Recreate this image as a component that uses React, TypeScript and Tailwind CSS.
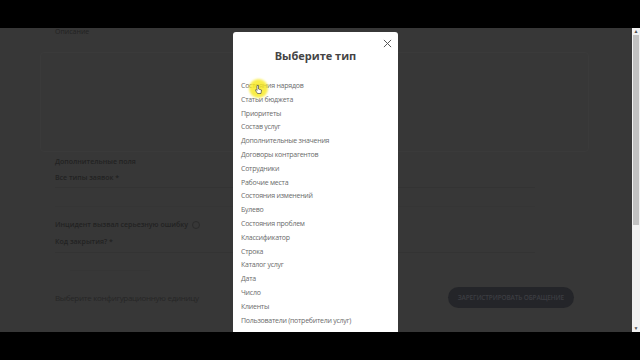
import React from 'react';

const types = [
  'Состояния нарядов',
  'Статьи бюджета',
  'Приоритеты',
  'Состав услуг',
  'Дополнительные значения',
  'Договоры контрагентов',
  'Сотрудники',
  'Рабочие места',
  'Состояния изменений',
  'Булево',
  'Состояния проблем',
  'Классификатор',
  'Строка',
  'Каталог услуг',
  'Дата',
  'Число',
  'Клиенты',
  'Пользователи (потребители услуг)',
];

const font = { fontFamily: '"Open Sans", "Noto Sans", sans-serif' };

export default function App() {
  return (
    <div className="w-[640px] h-[360px] bg-black flex flex-col overflow-hidden" style={font}>
      <div className="h-[28px] shrink-0" />
      <div className="h-[304px] flex relative">
        {/* dimmed page */}
        <div className="flex-1 bg-[#373737] relative overflow-hidden">
          <div className="pl-[55px] pr-[58px] text-[#222]">
            <div className="text-[7px] leading-[8px]">Описание</div>
            <div className="mt-[16px] h-[100px] mx-[-15px] border border-[#3a3a3a] rounded" />
            <div className="mt-[5px] text-[7px] font-semibold leading-[10px]">Дополнительные поля</div>
            <div className="mt-[6px] text-[7px] font-semibold leading-[10px]">Все типы заявок *</div>
            <div className="mt-[4px] h-px bg-[#333] w-[480px]" />
            <div className="mt-[18px] h-px bg-[#353535] w-[480px]" />
            <div className="mt-[13px] flex items-center gap-[4px]">
              <span className="text-[7px] font-semibold leading-[10px]">Инцидент вызвал серьезную ошибку</span>
              <span className="w-[8px] h-[8px] rounded-full border border-[#2a2a2a]" />
            </div>
            <div className="mt-[7px] text-[7px] font-semibold leading-[10px]">Код закрытия? *</div>
            <div className="mt-[5px] h-px bg-[#333] w-[480px]" />
            <div className="mt-[17px] ml-[15px] h-px bg-[#353535] w-[80px]" />
            <div className="mt-[16px] flex items-center justify-between">
              <span className="text-[8px] tracking-[-0.3px] text-[#262626]">Выберите конфигурационную единицу</span>
              <span className="h-[21px] px-[10px] rounded-full bg-[#242529] text-[6.5px] font-semibold text-[#3c3d42] flex items-center tracking-tight">
                ЗАРЕГИСТРИРОВАТЬ ОБРАЩЕНИЕ
              </span>
            </div>
          </div>

          {/* modal */}
          <div className="absolute left-[233px] top-[4px] w-[165px] h-[320px] bg-white rounded-t-[3px]">
            <button className="absolute right-[6px] top-[7px] text-[#555]">
              <svg width="9" height="9" viewBox="0 0 10 10" stroke="currentColor" strokeWidth="1.1">
                <path d="M1 1L9 9M9 1L1 9" />
              </svg>
            </button>
            <div className="pt-[16px] text-center text-[11px] font-bold text-[#444] leading-[16px]">Выберите тип</div>
            <ul className="mt-[15px] px-[8px] text-[7px] tracking-[-0.25px] text-[#6b6b6b]">
              {types.map(t => (
                <li key={t} className="h-[13.8px] leading-[13.8px] whitespace-nowrap">{t}</li>
              ))}
            </ul>
            {/* cursor highlight */}
            <div className="absolute left-[16px] top-[47px] w-[19px] h-[19px] rounded-full bg-[#f7e81a]/80 blur-[1px]" />
            <svg className="absolute left-[22px] top-[53px]" width="7" height="9" viewBox="0 0 7 9">
              <path d="M2 0.5v5L1 4.5 0.5 5.5 2.5 8.5h3.5l0.5-3.5-3-1V0.5z" fill="#fff" stroke="#333" strokeWidth="0.6" />
            </svg>
          </div>
        </div>
        {/* scrollbar */}
        <div className="w-[8px] bg-[#f1f1f1] flex flex-col items-center">
          <div className="h-[7px] text-[5px] leading-[7px] text-[#505050]">▲</div>
          <div className="w-[6px] h-[190px] bg-[#c1c1c1]" />
          <div className="flex-1" />
          <div className="h-[7px] text-[5px] leading-[7px] text-[#505050]">▼</div>
        </div>
      </div>
      <div className="h-[28px] shrink-0" />
    </div>
  );
}
